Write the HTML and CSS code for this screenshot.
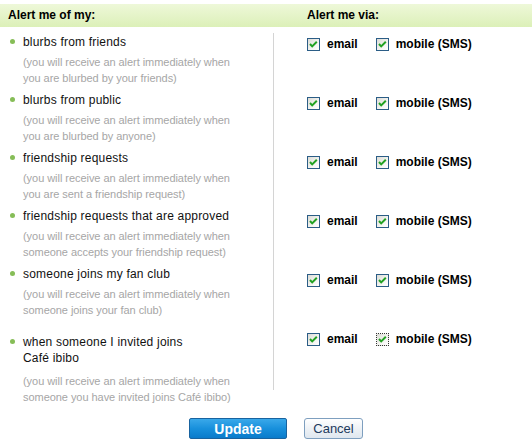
FILE: index.html
```html
<!DOCTYPE html>
<html>
<head>
<meta charset="utf-8">
<link rel="stylesheet" href="styles.css">
</head>
<body>
<div class="page">
  <div class="head">
    <div class="hcol">Alert me of my:</div>
    <div class="hcol via">Alert me via:</div>
  </div>
  <div class="content">
    <ul class="alerts">
      <li class="alert">
        <div class="title">blurbs from friends</div>
        <div class="desc">(you will receive an alert immediately when<br>you are blurbed by your friends)</div>
      </li>
      <li class="alert">
        <div class="title">blurbs from public</div>
        <div class="desc">(you will receive an alert immediately when<br>you are blurbed by anyone)</div>
      </li>
      <li class="alert">
        <div class="title">friendship requests</div>
        <div class="desc">(you will receive an alert immediately when<br>you are sent a friendship request)</div>
      </li>
      <li class="alert">
        <div class="title">friendship requests that are approved</div>
        <div class="desc">(you will receive an alert immediately when<br>someone accepts your friendship request)</div>
      </li>
      <li class="alert">
        <div class="title">someone joins my fan club</div>
        <div class="desc">(you will receive an alert immediately when<br>someone joins your fan club)</div>
      </li>
      <li class="alert last">
        <div class="title">when someone I invited joins<br>Café ibibo</div>
        <div class="desc">(you will receive an alert immediately when<br>someone you have invited joins Café ibibo)</div>
      </li>
    </ul>
    <ul class="channels">
      <li class="chrow">
        <label class="opt"><span class="cb"><svg viewBox="0 0 11 11" width="11" height="11"><path d="M2 5 L4.2 7.4 L8.8 2.8" /></svg></span>email</label>
        <label class="opt"><span class="cb"><svg viewBox="0 0 11 11" width="11" height="11"><path d="M2 5 L4.2 7.4 L8.8 2.8" /></svg></span>mobile (SMS)</label>
      </li>
      <li class="chrow">
        <label class="opt"><span class="cb"><svg viewBox="0 0 11 11" width="11" height="11"><path d="M2 5 L4.2 7.4 L8.8 2.8" /></svg></span>email</label>
        <label class="opt"><span class="cb"><svg viewBox="0 0 11 11" width="11" height="11"><path d="M2 5 L4.2 7.4 L8.8 2.8" /></svg></span>mobile (SMS)</label>
      </li>
      <li class="chrow">
        <label class="opt"><span class="cb"><svg viewBox="0 0 11 11" width="11" height="11"><path d="M2 5 L4.2 7.4 L8.8 2.8" /></svg></span>email</label>
        <label class="opt"><span class="cb"><svg viewBox="0 0 11 11" width="11" height="11"><path d="M2 5 L4.2 7.4 L8.8 2.8" /></svg></span>mobile (SMS)</label>
      </li>
      <li class="chrow">
        <label class="opt"><span class="cb"><svg viewBox="0 0 11 11" width="11" height="11"><path d="M2 5 L4.2 7.4 L8.8 2.8" /></svg></span>email</label>
        <label class="opt"><span class="cb"><svg viewBox="0 0 11 11" width="11" height="11"><path d="M2 5 L4.2 7.4 L8.8 2.8" /></svg></span>mobile (SMS)</label>
      </li>
      <li class="chrow">
        <label class="opt"><span class="cb"><svg viewBox="0 0 11 11" width="11" height="11"><path d="M2 5 L4.2 7.4 L8.8 2.8" /></svg></span>email</label>
        <label class="opt"><span class="cb"><svg viewBox="0 0 11 11" width="11" height="11"><path d="M2 5 L4.2 7.4 L8.8 2.8" /></svg></span>mobile (SMS)</label>
      </li>
      <li class="chrow">
        <label class="opt"><span class="cb"><svg viewBox="0 0 11 11" width="11" height="11"><path d="M2 5 L4.2 7.4 L8.8 2.8" /></svg></span>email</label>
        <label class="opt"><span class="cb focus"><svg viewBox="0 0 11 11" width="11" height="11"><path d="M2 5 L4.2 7.4 L8.8 2.8" /></svg></span>mobile (SMS)</label>
      </li>
    </ul>
  </div>
  <div class="actions">
    <button class="btn update">Update</button>
    <button class="btn cancel">Cancel</button>
  </div>
</div>
</body>
</html>
```

FILE: styles.css
```css
html, body {
  margin: 0;
  padding: 0;
  background: #fff;
}
body {
  font-family: "Liberation Sans", Arial, sans-serif;
  color: #000;
  width: 532px;
  height: 442px;
  overflow: hidden;
}
.page {
  padding-top: 4px;
}
.head {
  display: grid;
  grid-template-columns: 273px 1fr;
  height: 23px;
  background: linear-gradient(to bottom, #eef8d9 0%, #dcf0b8 100%);
}
.hcol {
  font-weight: bold;
  font-size: 12px;
  line-height: 23px;
  padding-left: 8px;
  color: #000;
}
.hcol.via {
  padding-left: 34px;
}
.content {
  display: grid;
  grid-template-columns: 273px 1fr;
  align-items: start;
  margin-top: 6px;
}
.alerts, .channels {
  list-style: none;
  margin: 0;
  padding: 0;
}
.alerts {
  padding-top: 1px;
}
.alert {
  display: grid;
  grid-template-columns: 23px 1fr;
  margin-bottom: 6px;
}
.alert::before {
  content: "";
  grid-column: 1;
  grid-row: 1;
  width: 5px;
  height: 5px;
  border-radius: 50%;
  background: #86bd57;
  margin: 5px 0 0 10px;
}
.alert.last {
  margin-top: 16px;
  margin-bottom: 0;
}
.title {
  grid-column: 2;
  grid-row: 1;
  font-size: 12px;
  letter-spacing: 0.2px;
  line-height: 16px;
  color: #111;
}
.desc {
  grid-column: 2;
  grid-row: 2;
  font-size: 11px;
  letter-spacing: -0.05px;
  line-height: 16px;
  color: #a6a6a6;
  margin-top: 4px;
}
.alert.last .desc {
  margin-top: 7px;
}
.channels {
  border-left: 1px solid #d4d4d4;
  padding: 1px 0 41px 33px;
  display: flex;
  flex-direction: column;
  gap: 39px;
}
.chrow {
  display: flex;
  height: 20px;
  align-items: center;
}
.opt {
  display: flex;
  align-items: center;
  font-size: 12px;
  font-weight: bold;
  color: #000;
  margin-right: 18px;
}
.cb {
  display: flex;
  align-items: center;
  justify-content: center;
  width: 11px;
  height: 11px;
  border: 1px solid #2b5d86;
  background: linear-gradient(135deg, #dcdcd6 0%, #f4f4f1 60%, #ffffff 100%);
  margin-right: 7px;
}
.cb.focus {
  border: 1px dotted #333;
}
.cb svg path {
  fill: none;
  stroke: #21a121;
  stroke-width: 2;
}
.actions {
  display: flex;
  justify-content: center;
  gap: 17px;
  padding-left: 20px;
  margin-top: 13px;
}
.btn {
  height: 21px;
  padding: 0;
  font-family: "Liberation Sans", Arial, sans-serif;
  cursor: pointer;
}
.update {
  width: 98px;
  border: 1px solid #19639f;
  border-radius: 2px;
  background: linear-gradient(to bottom, #3aa8ea 0%, #1890dc 50%, #0a7bcb 100%);
  color: #fff;
  font-weight: bold;
  font-size: 14px;
}
.cancel {
  width: 59px;
  border: 1px solid #7e9fbf;
  border-radius: 3px;
  background: linear-gradient(to bottom, #ffffff 0%, #eef2f6 50%, #dfe7ef 100%);
  color: #1d3a5c;
  font-size: 13px;
}
```
